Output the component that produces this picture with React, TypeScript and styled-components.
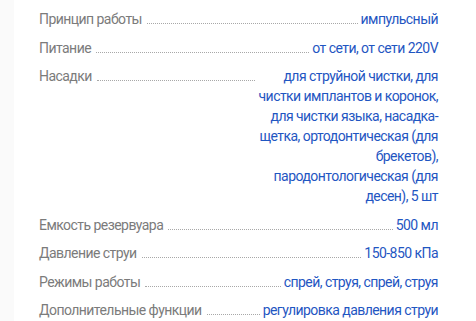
import React from "react";
import styled, { createGlobalStyle } from "styled-components";

const Global = createGlobalStyle`
  html, body { margin: 0; padding: 0; background: #fafafa; }
  body { font-family: Roboto, "Liberation Sans", sans-serif; }
`;

const Panel = styled.div`
  margin-left: 14px;
  background: #fff;
  min-height: 321px;
  padding: 9px 38px 0 25px;
  box-sizing: border-box;
`;

const List = styled.dl`
  margin: 0;
  display: flex;
  flex-direction: column;
  gap: 8.5px;
`;

const Row = styled.div`
  display: flex;
  align-items: flex-start;
  font-size: 14px;
  letter-spacing: -0.55px;
  line-height: 20px;
`;

const Label = styled.dt`
  flex: none;
  color: #7b7b7b;
  margin: 0;
`;

const Leader = styled.span`
  flex: 1;
  height: 14px;
  margin: 0 3px 0 5px;
  border-bottom: 1px dotted #a8a8a8;
`;

const Value = styled.dd`
  margin: 0;
  max-width: 45%;
  text-align: right;
  color: #1f56c2;
`;

const specs: [string, string][] = [
  ["Принцип работы", "импульсный"],
  ["Питание", "от сети, от сети 220V"],
  [
    "Насадки",
    "для струйной чистки, для чистки имплантов и коронок, для чистки языка, насадка-щетка, ортодонтическая (для брекетов), пародонтологическая (для десен), 5 шт",
  ],
  ["Емкость резервуара", "500 мл"],
  ["Давление струи", "150-850 кПа"],
  ["Режимы работы", "спрей, струя, спрей, струя"],
  ["Дополнительные функции", "регулировка давления струи"],
];

export default function App() {
  return (
    <>
      <Global />
      <Panel>
        <List>
          {specs.map(([k, v]) => (
            <Row key={k}>
              <Label>{k}</Label>
              <Leader />
              <Value>{v}</Value>
            </Row>
          ))}
        </List>
      </Panel>
    </>
  );
}
